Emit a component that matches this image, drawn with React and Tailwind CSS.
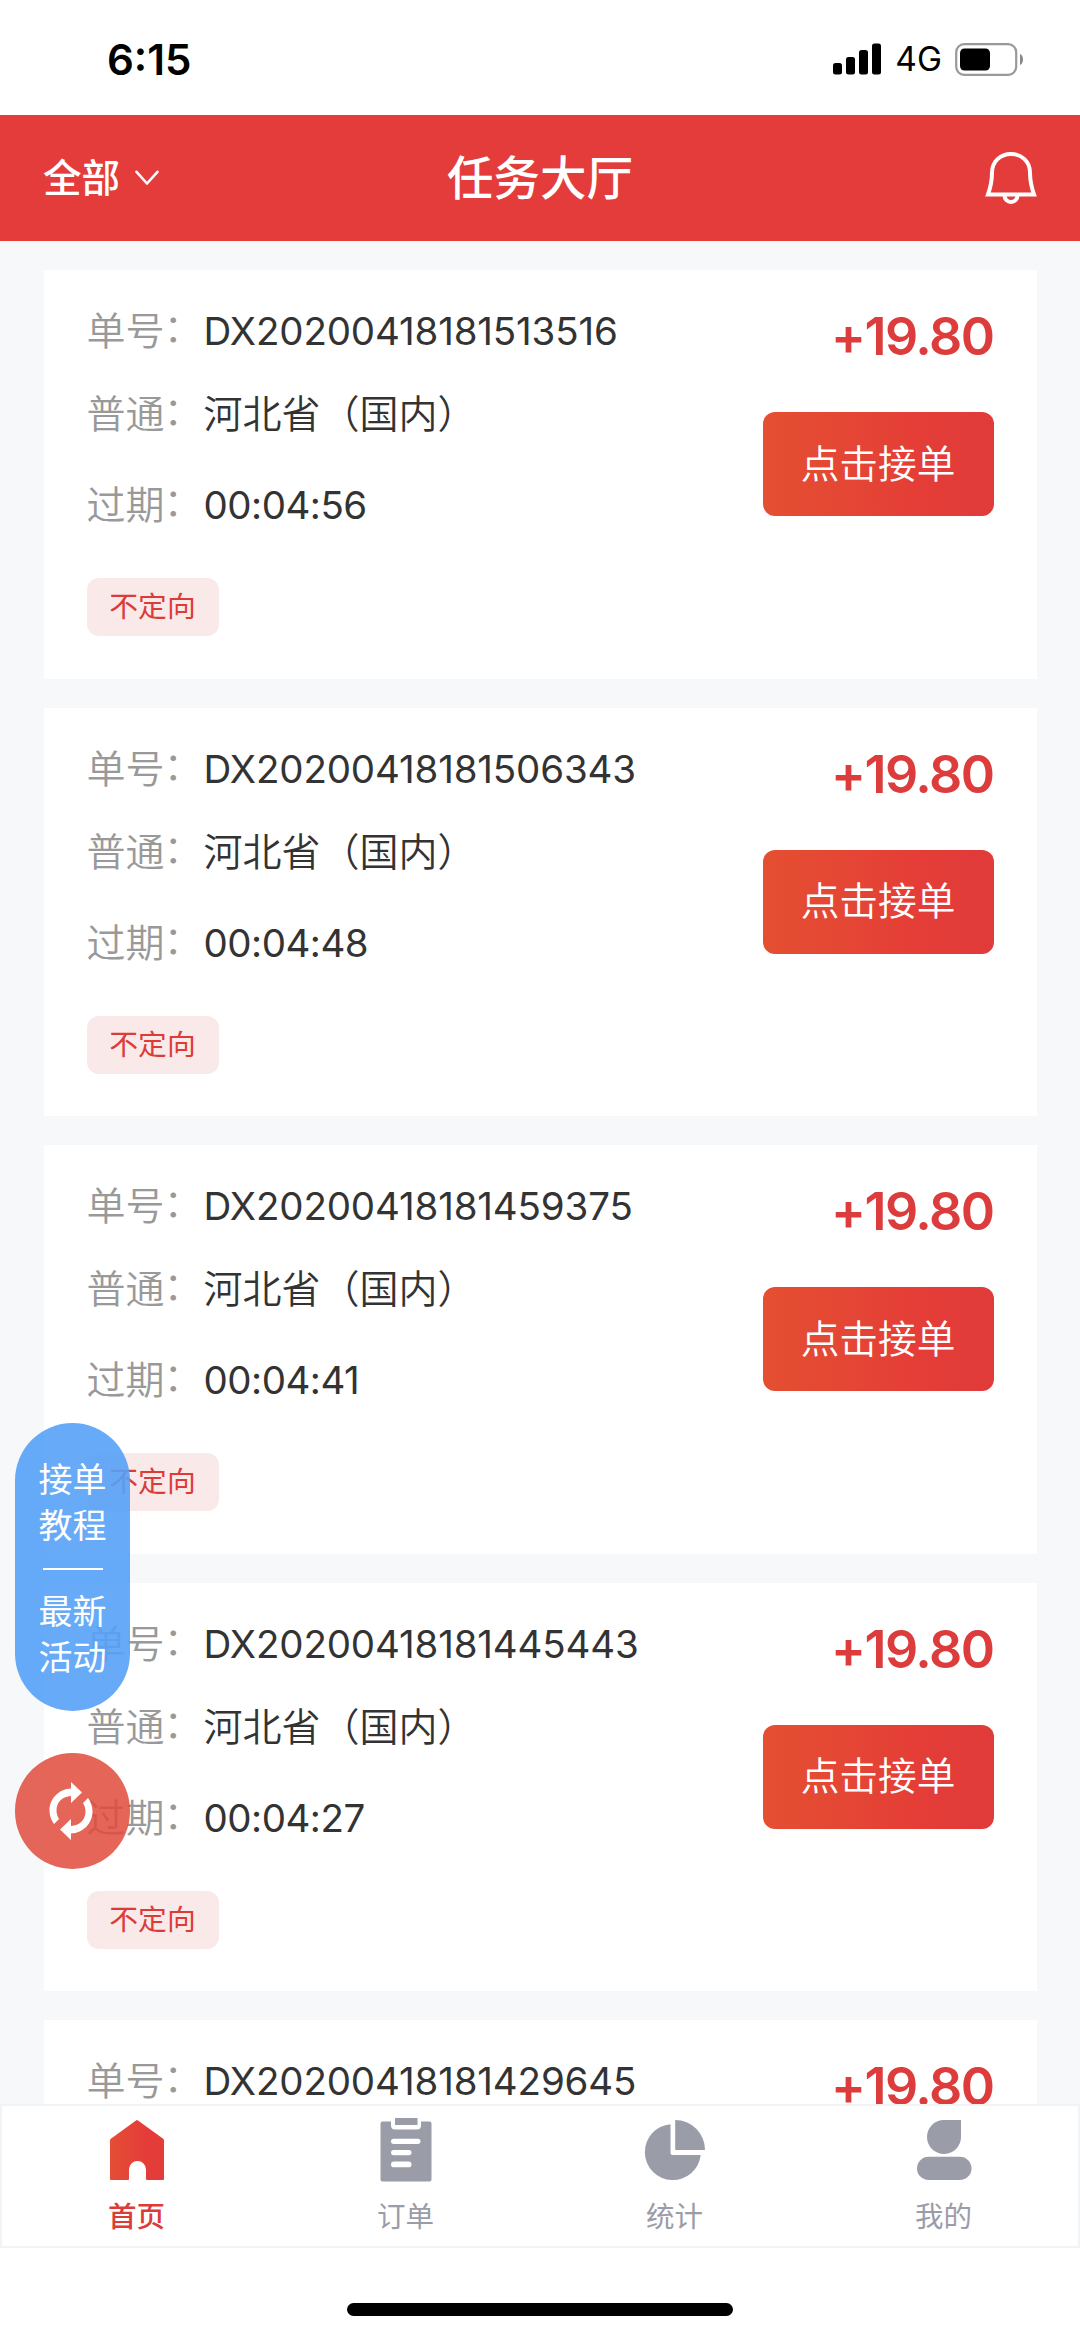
const orders = [
  { id: "DX20200418181513516", region: "河北省（国内）", expires: "00:04:56", price: "+19.80" },
  { id: "DX20200418181506343", region: "河北省（国内）", expires: "00:04:48", price: "+19.80" },
  { id: "DX20200418181459375", region: "河北省（国内）", expires: "00:04:41", price: "+19.80" },
  { id: "DX20200418181445443", region: "河北省（国内）", expires: "00:04:27", price: "+19.80" },
  { id: "DX20200418181429645", region: "河北省（国内）", expires: "00:04:15", price: "+19.80" },
];

function StatusBar() {
  return (
    <div className="flex h-[115px] shrink-0 items-center justify-between pl-[107px] pr-[56px] pt-[3px]">
      <span className="pt-px text-[42px] font-semibold leading-none text-black">6:15</span>
      <div className="flex items-center">
        <svg width="48" height="32" viewBox="0 0 48 32" className="mr-[14px]">
          <rect x="0" y="20" width="9" height="11.5" rx="2.5" />
          <rect x="13" y="14" width="9" height="17.5" rx="2.5" />
          <rect x="26" y="7" width="9" height="24.5" rx="2.5" />
          <rect x="39" y="0.5" width="9" height="31" rx="2.5" />
        </svg>
        <span className="mr-[13px] pt-[2px] text-[33.500px] leading-none text-black">4G</span>
        <svg width="69" height="33" viewBox="0 0 69 33">
          <rect x="1.2" y="1.2" width="60" height="30.6" rx="8" fill="none" stroke="#999" strokeWidth="2.2" />
          <rect x="5" y="5.5" width="30" height="22" rx="4.5" />
          <path d="M65 11c4 1.500 4 9.500 0 11z" fill="#888" />
        </svg>
      </div>
    </div>
  );
}

function Header() {
  return (
    <header className="grid h-[126px] shrink-0 grid-cols-3 items-center bg-[#e33c3a] pl-[43px] pr-[43px] text-white">
      <div className="flex items-center gap-[15px] text-[38.500px] leading-none">
        <span className="font-medium">全部</span>
        <svg width="24" height="16" viewBox="0 0 24 16" fill="none" stroke="white" strokeWidth="2.6" strokeLinecap="round" strokeLinejoin="round">
          <path d="M1.500 1.800 12 13.500 22.500 1.800" />
        </svg>
      </div>
      <h1 className="pt-px text-center text-[46.500px] font-medium leading-none">任务大厅</h1>
      <svg width="52" height="54" viewBox="0 0 52 54" fill="none" stroke="white" strokeWidth="4" className="justify-self-end">
        <path d="M3 43.500C6 35 7 29 7 21.500C7 10.500 15.500 3 26 3s19 7.500 19 18.500c0 7.500 1 13.500 4 22z" />
        <path d="M19.500 44.500a6.500 6.500 0 0 0 13 0" />
      </svg>
    </header>
  );
}

function Row({ label, children }) {
  return (
    <div className="flex whitespace-nowrap text-[39px] font-[350] leading-[58px]">
      <span className="w-[117px] shrink-0 text-[#999]">
        {label}
        <span className="inline-block -translate-x-px -translate-y-[3px]">：</span>
      </span>
      <span className="text-[#333]">{children}</span>
    </div>
  );
}

function OrderCard({ order }) {
  return (
    <div className="flex h-[408.600px] shrink-0 justify-between bg-white pl-[43px] pr-[43px]">
      <div className="flex flex-col items-start pt-[32px]">
        <Row label="单号">
          <span className="text-[38.500px] font-[370] tracking-[-0.15px] [font-feature-settings:'calt'_0]">{order.id}</span>
        </Row>
        <div className="mt-[25px]">
          <Row label="普通">{order.region}</Row>
        </div>
        <div className="mt-[33px]">
          <Row label="过期">
            <span className="text-[38.500px] font-[370] tracking-[-0.5px] [font-feature-settings:'calt'_0]">{order.expires}</span>
          </Row>
        </div>
        <span className="mt-[44px] flex h-[58px] w-[132px] items-center justify-center rounded-[12px] bg-[#fae9e9] pt-px text-[28.800px] leading-none text-[#dc3c38]">
          不定向
        </span>
      </div>
      <div className="flex flex-col items-end pt-[37px]">
        <span className="text-[52px] font-[560] leading-[60px] tracking-[-1.500px] text-[#dc3c3c] [font-feature-settings:'calt'_0]">
          {order.price}
        </span>
        <button className="mt-[45px] h-[104px] w-[231px] rounded-[12px] bg-linear-to-r from-[#e44f31] via-[#e53e37] via-65% to-[#e03a3a] text-[38.700px] font-[350] leading-none text-white">
          点击接单
        </button>
      </div>
    </div>
  );
}

function HomeIcon() {
  return (
    <svg width="66" height="66" viewBox="0 0 66 66">
      <defs>
        <linearGradient id="home" x1="0" x2="1">
          <stop offset="0" stopColor="#e54d35" />
          <stop offset="0.7" stopColor="#e43c39" />
        </linearGradient>
      </defs>
      <path
        d="M32 3.500q1-.8 2 0L59.500 22q.5.500.5 1.500V62q0 1-1 1H43q-1 0-1-1V52.500a8.500 8.500 0 0 0-17 0V62q0 1-1 1H7q-1 0-1-1V23.500q0-1 .5-1.500z"
        fill="url(#home)"
      />
    </svg>
  );
}

function OrdersIcon() {
  return (
    <svg width="66" height="66" viewBox="0 0 66 66" fill="#9a9ca8">
      <path d="M9.500 4.500h8.500v4q0 4 4 4h22q4 0 4-4v-4h8.500q2 0 2 2v56q0 2-2 2h-47q-2 0-2-2v-56q0-2 2-2z" />
      <rect x="22" y="1" width="22.500" height="7" />
      <g fill="white">
        <rect x="18" y="21.700" width="29.500" height="5.200" rx="2.600" />
        <rect x="18" y="33" width="20.500" height="5.200" rx="2.600" />
        <rect x="18" y="44.500" width="20.500" height="5.800" rx="2.900" />
      </g>
    </svg>
  );
}

function StatsIcon() {
  return (
    <svg width="66" height="66" viewBox="0 0 66 66" fill="#9a9ca8">
      <path d="M28.500 7.200V36q0 2 2 2h28.200A28 28 0 1 1 28.500 7.200z" />
      <path d="M33.200 3A30 30 0 0 1 63 33H33.200z" />
    </svg>
  );
}

function MineIcon() {
  return (
    <svg width="66" height="66" viewBox="0 0 66 66" fill="#9a9ca8">
      <path d="M33 3H50V19.500A17 17 0 1 1 33 3z" />
      <rect x="6" y="39.800" width="54.500" height="23.200" rx="11.600" />
    </svg>
  );
}

const tabs = [
  { label: "首页", Icon: HomeIcon, active: true },
  { label: "订单", Icon: OrdersIcon },
  { label: "统计", Icon: StatsIcon },
  { label: "我的", Icon: MineIcon },
];

function TabBar() {
  return (
    <nav className="grid h-[143.500px] shrink-0 grid-cols-4 border-[2.500px] border-[#f2f3f4] bg-white pt-[11px]">
      {tabs.map(({ label, Icon, active }) => (
        <div key={label} className={`flex flex-col items-center gap-[17px] ${active ? "text-[#dc3c38]" : "text-[#9a9ca8]"}`}>
          <Icon />
          <span className={`text-[28.500px] leading-[34px] ${active ? "font-medium" : ""}`}>{label}</span>
        </div>
      ))}
    </nav>
  );
}

function FloatingActions() {
  return (
    <div className="absolute left-[15px] top-[1423px] flex w-[115px] flex-col gap-[42px] text-white">
      <div className="flex h-[288px] flex-col items-center justify-center rounded-full bg-[#55a1f7]/90 pt-[3px] text-[34px] leading-[46px]">
        <span>接单</span>
        <span>教程</span>
        <div className="my-[19px] h-[2px] w-[60px] bg-white" />
        <span>最新</span>
        <span>活动</span>
      </div>
      <div className="flex h-[116px] items-center justify-center rounded-full bg-[#e04b3c]/85">
        <svg width="44" height="58" viewBox="0 0 44 58" fill="white" className="-ml-[3px]">
          <path d="M22 0v6.500C9.500 7 .5 17 .5 28.500c0 5.500 2 10 4.500 13.500l5-5c-1.500-2.500-2.500-5.500-2.500-8.500 0-8.500 6-14 14.500-14.500V21l11-10.500z" />
          <path d="M22 58v-6.500C34.500 51 43.500 41 43.500 29.500c0-5.500-2-10-4.500-13.500l-5 5c1.500 2.500 2.500 5.500 2.500 8.500 0 8.500-6 14-14.500 14.500V37L11 47.500z" />
        </svg>
      </div>
    </div>
  );
}

export default function App() {
  return (
    <div className="relative flex h-[2337px] w-[1080px] flex-col overflow-hidden bg-white font-['Inter','Noto_Sans_CJK_SC',sans-serif]">
      <StatusBar />
      <Header />
      <main className="flex min-h-0 flex-1 flex-col gap-[29px] overflow-hidden bg-[#f6f8fa] px-[43.500px] pt-[29px]">
        {orders.map((order) => (
          <OrderCard key={order.id} order={order} />
        ))}
      </main>
      <TabBar />
      <div className="flex h-[89.500px] shrink-0 items-end justify-center pb-[21px]">
        <div className="h-[13px] w-[386px] rounded-full bg-black" />
      </div>
      <FloatingActions />
    </div>
  );
}
